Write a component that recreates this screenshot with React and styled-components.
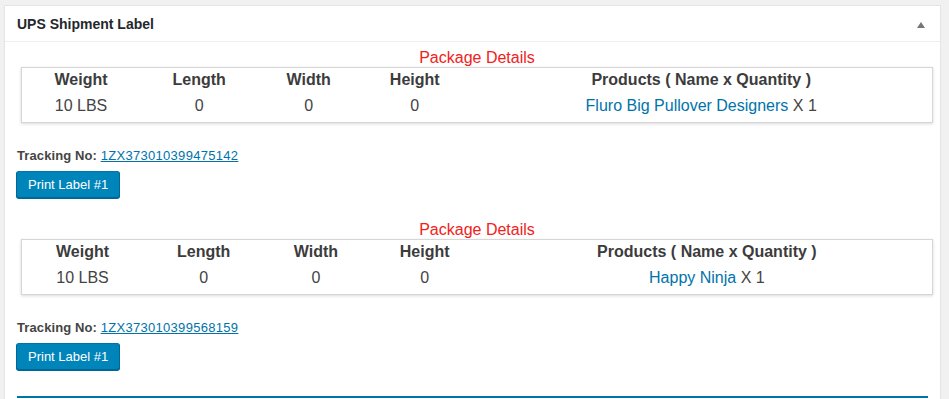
import styled, { createGlobalStyle } from 'styled-components'

const GlobalStyle = createGlobalStyle`
    body {
        margin: 0;
        background: #f1f1f1;
        font-family: "Liberation Sans", Arial, sans-serif;
        color: #444;
    }
`

const packages = [
    { weight: '10 LBS', length: 0, width: 0, height: 0, product: 'Fluro Big Pullover Designers', qty: 1, tracking: '1ZX373010399475142' },
    { weight: '10 LBS', length: 0, width: 0, height: 0, product: 'Happy Ninja', qty: 1, tracking: '1ZX373010399568159' },
]

export default function App() {
    return (
        <>
            <GlobalStyle />
            <Panel>
                <Header>
                    <Title>UPS Shipment Label</Title>
                    <Toggle />
                </Header>
                <Content>
                    {packages.map((p, i) => (
                        <PackageBlock key={i} $first={i === 0}>
                            <TableBox>
                                <Caption>Package Details</Caption>
                                <DetailTable>
                                    <thead>
                                        <tr>
                                            <th>Weight</th>
                                            <th>Length</th>
                                            <th>Width</th>
                                            <th>Height</th>
                                            <th>Products ( Name x Quantity )</th>
                                        </tr>
                                    </thead>
                                    <tbody>
                                        <tr>
                                            <td>{p.weight}</td>
                                            <td>{p.length}</td>
                                            <td>{p.width}</td>
                                            <td>{p.height}</td>
                                            <td><ProductLink href="#">{p.product}</ProductLink> X {p.qty}</td>
                                        </tr>
                                    </tbody>
                                </DetailTable>
                            </TableBox>
                            <Tracking>
                                <strong>Tracking No:</strong> <TrackLink href="#">{p.tracking}</TrackLink>
                            </Tracking>
                            <PrintButton type="button">Print Label #1</PrintButton>
                        </PackageBlock>
                    ))}
                    <Rule />
                </Content>
            </Panel>
        </>
    )
}

const Panel = styled.div`
    margin: 5px 0 0 4px;
    width: 935px;
    background: #fff;
    border: 1px solid #e5e5e5;
    box-shadow: 0 1px 1px rgba(0, 0, 0, 0.04);
    min-height: 394px;
`

const Header = styled.div`
    display: flex;
    align-items: center;
    justify-content: space-between;
    height: 35px;
    padding: 0 15px 0 12px;
    border-bottom: 1px solid #eee;
`

const Title = styled.h2`
    margin: 0;
    font-size: 14px;
    font-weight: 700;
    color: #23282d;
`

const Toggle = styled.span`
    width: 0;
    height: 0;
    border-left: 4px solid transparent;
    border-right: 4px solid transparent;
    border-bottom: 6px solid #72777c;
    margin-top: 2px;
`

const Content = styled.div`
    padding: 0 12px;
`

const PackageBlock = styled.div`
    padding-top: ${p => (p.$first ? '7px' : '23px')};
`

const TableBox = styled.div`
    width: 912px;
    margin-left: 4px;
`

const Caption = styled.div`
    text-align: center;
    color: #f0221b;
    font-size: 16px;
    line-height: 18px;
`

const DetailTable = styled.table`
    width: 100%;
    border-collapse: collapse;
    border: 1px solid #d6d6d6;
    box-shadow: 0 1px 3px rgba(0, 0, 0, 0.15);

    th, td {
        padding: 3px 4px;
        line-height: 19px;
        font-size: 16px;
        text-align: center;
        white-space: nowrap;
    }

    th {
        font-weight: 700;
        color: #3c3c3c;
        padding-top: 2px;
        padding-bottom: 4px;
    }

    td {
        color: #444;
    }

    tbody td {
        padding-bottom: 7px;
    }
`

const ProductLink = styled.a`
    color: #0073aa;
    text-decoration: none;
`

const Tracking = styled.p`
    margin: 24px 0 6px;
    font-size: 13px;
    line-height: 18px;
    color: #444;
    letter-spacing: 0.1px;

    strong {
        font-weight: 700;
    }
`

const TrackLink = styled.a`
    color: #0073aa;
    text-decoration: underline;
    letter-spacing: 0.3px;
`

const PrintButton = styled.button`
    display: block;
    height: 27px;
    margin-left: -1px;
    padding: 0 11px;
    font-family: inherit;
    font-size: 13px;
    color: #fff;
    background: #0085ba;
    border: 1px solid #0073aa;
    border-color: #0073aa #006799 #006799;
    border-radius: 3px;
    box-shadow: 0 1px 0 #006799;
    cursor: pointer;
`

const Rule = styled.div`
    height: 2px;
    margin-top: 26px;
    background: #0073aa;
`
